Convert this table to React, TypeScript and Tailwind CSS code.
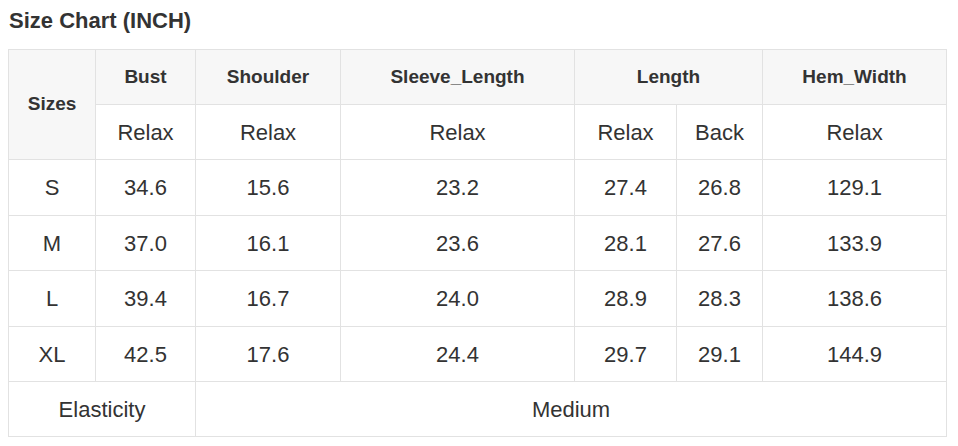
import React from "react";

const rows = [
  ["S", "34.6", "15.6", "23.2", "27.4", "26.8", "129.1"],
  ["M", "37.0", "16.1", "23.6", "28.1", "27.6", "133.9"],
  ["L", "39.4", "16.7", "24.0", "28.9", "28.3", "138.6"],
  ["XL", "42.5", "17.6", "24.4", "29.7", "29.1", "144.9"],
];
const rowH = ["h-[56px]", "h-[55px]", "h-[56px]", "h-[55px]"];

export default function App() {
  const th = "border border-[#e2e2e2] bg-[#f7f7f7] font-bold text-[19px] text-center align-middle p-0";
  const td = "border border-[#e2e2e2] bg-white text-[22px] text-center align-middle p-0";
  return (
    <div className="bg-white w-[958px] h-[446px] pl-[8px] pt-[8px] text-[#333333] font-['Liberation_Sans',Arial,sans-serif]">
      <div className="text-[22px] font-bold leading-[25px] pl-[1px] mb-[16px]">Size Chart (INCH)</div>
      <table className="border-collapse table-fixed w-[938px]">
        <colgroup>
          <col className="w-[87px]" />
          <col className="w-[100px]" />
          <col className="w-[145px]" />
          <col className="w-[234px]" />
          <col className="w-[102px]" />
          <col className="w-[86px]" />
          <col className="w-[184px]" />
        </colgroup>
        <tbody>
          <tr className="h-[55px]">
            <th rowSpan={2} className={th}>Sizes</th>
            <th className={th}>Bust</th>
            <th className={th}>Shoulder</th>
            <th className={th}>Sleeve_Length</th>
            <th colSpan={2} className={th}>Length</th>
            <th className={th}>Hem_Width</th>
          </tr>
          <tr className="h-[55px]">
            <td className={td}>Relax</td>
            <td className={td}>Relax</td>
            <td className={td}>Relax</td>
            <td className={td}>Relax</td>
            <td className={td}>Back</td>
            <td className={td}>Relax</td>
          </tr>
          {rows.map((r, i) => (
            <tr key={r[0]} className={rowH[i]}>
              {r.map((c, j) => (
                <td key={j} className={td}>{c}</td>
              ))}
            </tr>
          ))}
          <tr className="h-[55px]">
            <td colSpan={2} className={td}>Elasticity</td>
            <td colSpan={5} className={td}>Medium</td>
          </tr>
        </tbody>
      </table>
    </div>
  );
}
